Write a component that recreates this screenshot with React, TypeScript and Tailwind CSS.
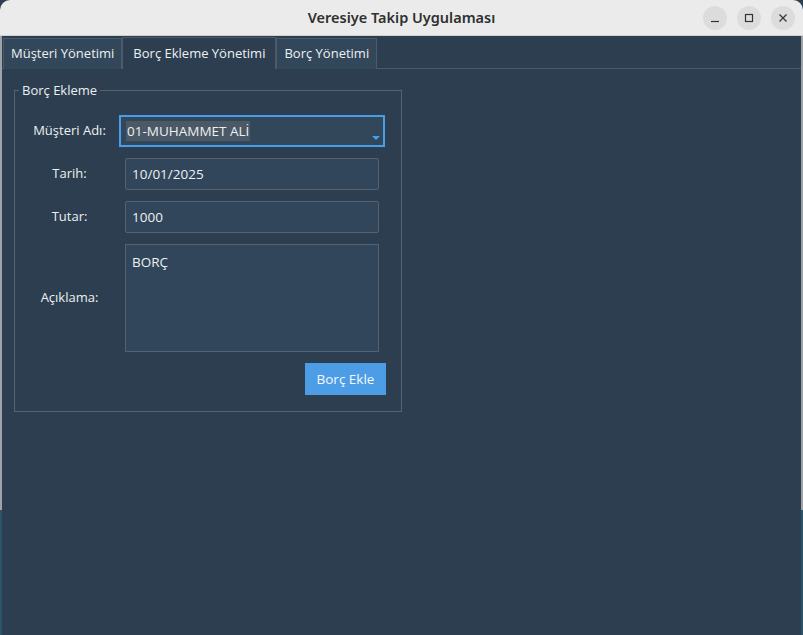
import { useState } from "react";

const tabs = ["Müşteri Yönetimi", "Borç Ekleme Yönetimi", "Borç Yönetimi"];

const EdgeStrip = () => (
  <div className="flex w-[2px] flex-col">
    <div className="h-[474px] bg-[#9ea3a7]" />
    <div className="flex-1 bg-[#2a5566]" />
  </div>
);

const App = () => {
  const [active, setActive] = useState(1);

  return (
    <div className="flex h-[635px] w-[803px] flex-col overflow-hidden bg-[#2c3e50] font-['Open_Sans',sans-serif] text-[13px] text-[#ecf0f1]">
      <header className="grid h-[36px] shrink-0 grid-cols-[1fr_auto_1fr] items-center rounded-t-[10px] border-b border-[#cfcfcf] bg-[#ebebeb]">
        <div />
        <h1 className="font-['Noto_Sans',sans-serif] text-[14.5px] font-semibold text-[#303030]">
          Veresiye Takip Uygulaması
        </h1>
        <div className="flex items-center justify-end gap-[10px] pr-[8px]">
          <button className="flex h-[24px] w-[24px] items-center justify-center rounded-full bg-[#dcdcdc]">
            <svg width="10" height="10" viewBox="0 0 10 10">
              <path d="M1 8.5h8" stroke="#333" strokeWidth="1.2" />
            </svg>
          </button>
          <button className="flex h-[24px] w-[24px] items-center justify-center rounded-full bg-[#dcdcdc]">
            <svg width="10" height="10" viewBox="0 0 10 10">
              <rect x="1.5" y="1.5" width="7" height="7" fill="none" stroke="#333" strokeWidth="1.2" />
            </svg>
          </button>
          <button className="flex h-[24px] w-[24px] items-center justify-center rounded-full bg-[#dcdcdc]">
            <svg width="10" height="10" viewBox="0 0 10 10">
              <path d="M1.5 1.5l7 7M8.5 1.5l-7 7" stroke="#333" strokeWidth="1.2" />
            </svg>
          </button>
        </div>
      </header>

      <div className="flex flex-1">
        <EdgeStrip />
        <main className="flex flex-1 flex-col">
          <nav className="flex h-[33px] border-b border-[#4b5b6b] pl-[1px] pt-[1px]">
            {tabs.map((t, i) => (
              <button
                key={t}
                onClick={() => setActive(i)}
                className={
                  i === active
                    ? "h-[32px] border border-b-0 border-[#4b5b6b] bg-[#2c3e50] px-[10px] text-[#ecf0f1]"
                    : "mt-[1px] h-[31px] border border-b-0 border-[#4b5b6b] bg-[#33475b] px-[7px] text-[#ecf0f1]"
                }
              >
                {t}
              </button>
            ))}
          </nav>

          <div className="pl-[12px] pt-[12px]">
            <fieldset className="w-[388px] border border-[#56626e] pb-[16px] pl-[7px] pr-[22px] pt-[16px]">
              <legend className="-ml-[3px] px-[3px] leading-[18px]">Borç Ekleme</legend>
              <div className="grid grid-cols-[95px_1fr] items-center gap-x-[8px] gap-y-[11px]">
                <label className="text-center">Müşteri Adı:</label>
                <div className="relative -mx-[6px] flex h-[32px] items-center border-2 border-[#4a9ee8] bg-[#33475b] pl-[5px]">
                  <span className="bg-[#4b5967] px-[1px] text-[13.5px] leading-[20px]">01-MUHAMMET ALİ</span>
                  <svg className="absolute bottom-[4px] right-[3px]" width="8" height="5" viewBox="0 0 8 5">
                    <path d="M0 0h8L4 4z" fill="#4a9ee8" />
                  </svg>
                </div>

                <label className="text-center">Tarih:</label>
                <input
                  readOnly
                  defaultValue="10/01/2025"
                  className="h-[32px] rounded-[2px] border border-[#56626e] bg-[#32465b] px-[6px] text-[13.5px] text-[#ecf0f1] outline-none"
                />

                <label className="text-center">Tutar:</label>
                <input
                  readOnly
                  defaultValue="1000"
                  className="h-[32px] rounded-[2px] border border-[#56626e] bg-[#32465b] px-[6px] text-[13.5px] text-[#ecf0f1] outline-none"
                />

                <label className="text-center">Açıklama:</label>
                <textarea
                  readOnly
                  defaultValue="BORÇ"
                  className="h-[108px] resize-none border border-[#56626e] bg-[#32465b] px-[6px] pt-[7px] text-[13.5px] text-[#ecf0f1] outline-none"
                />

                <div className="col-span-2 flex justify-end">
                  <button className="-mr-[7px] h-[32px] w-[81px] bg-[#4c9de6] text-[13.5px] text-[#f4f8fb]">
                    Borç Ekle
                  </button>
                </div>
              </div>
            </fieldset>
          </div>
        </main>
        <EdgeStrip />
      </div>
    </div>
  );
};

export default App;
